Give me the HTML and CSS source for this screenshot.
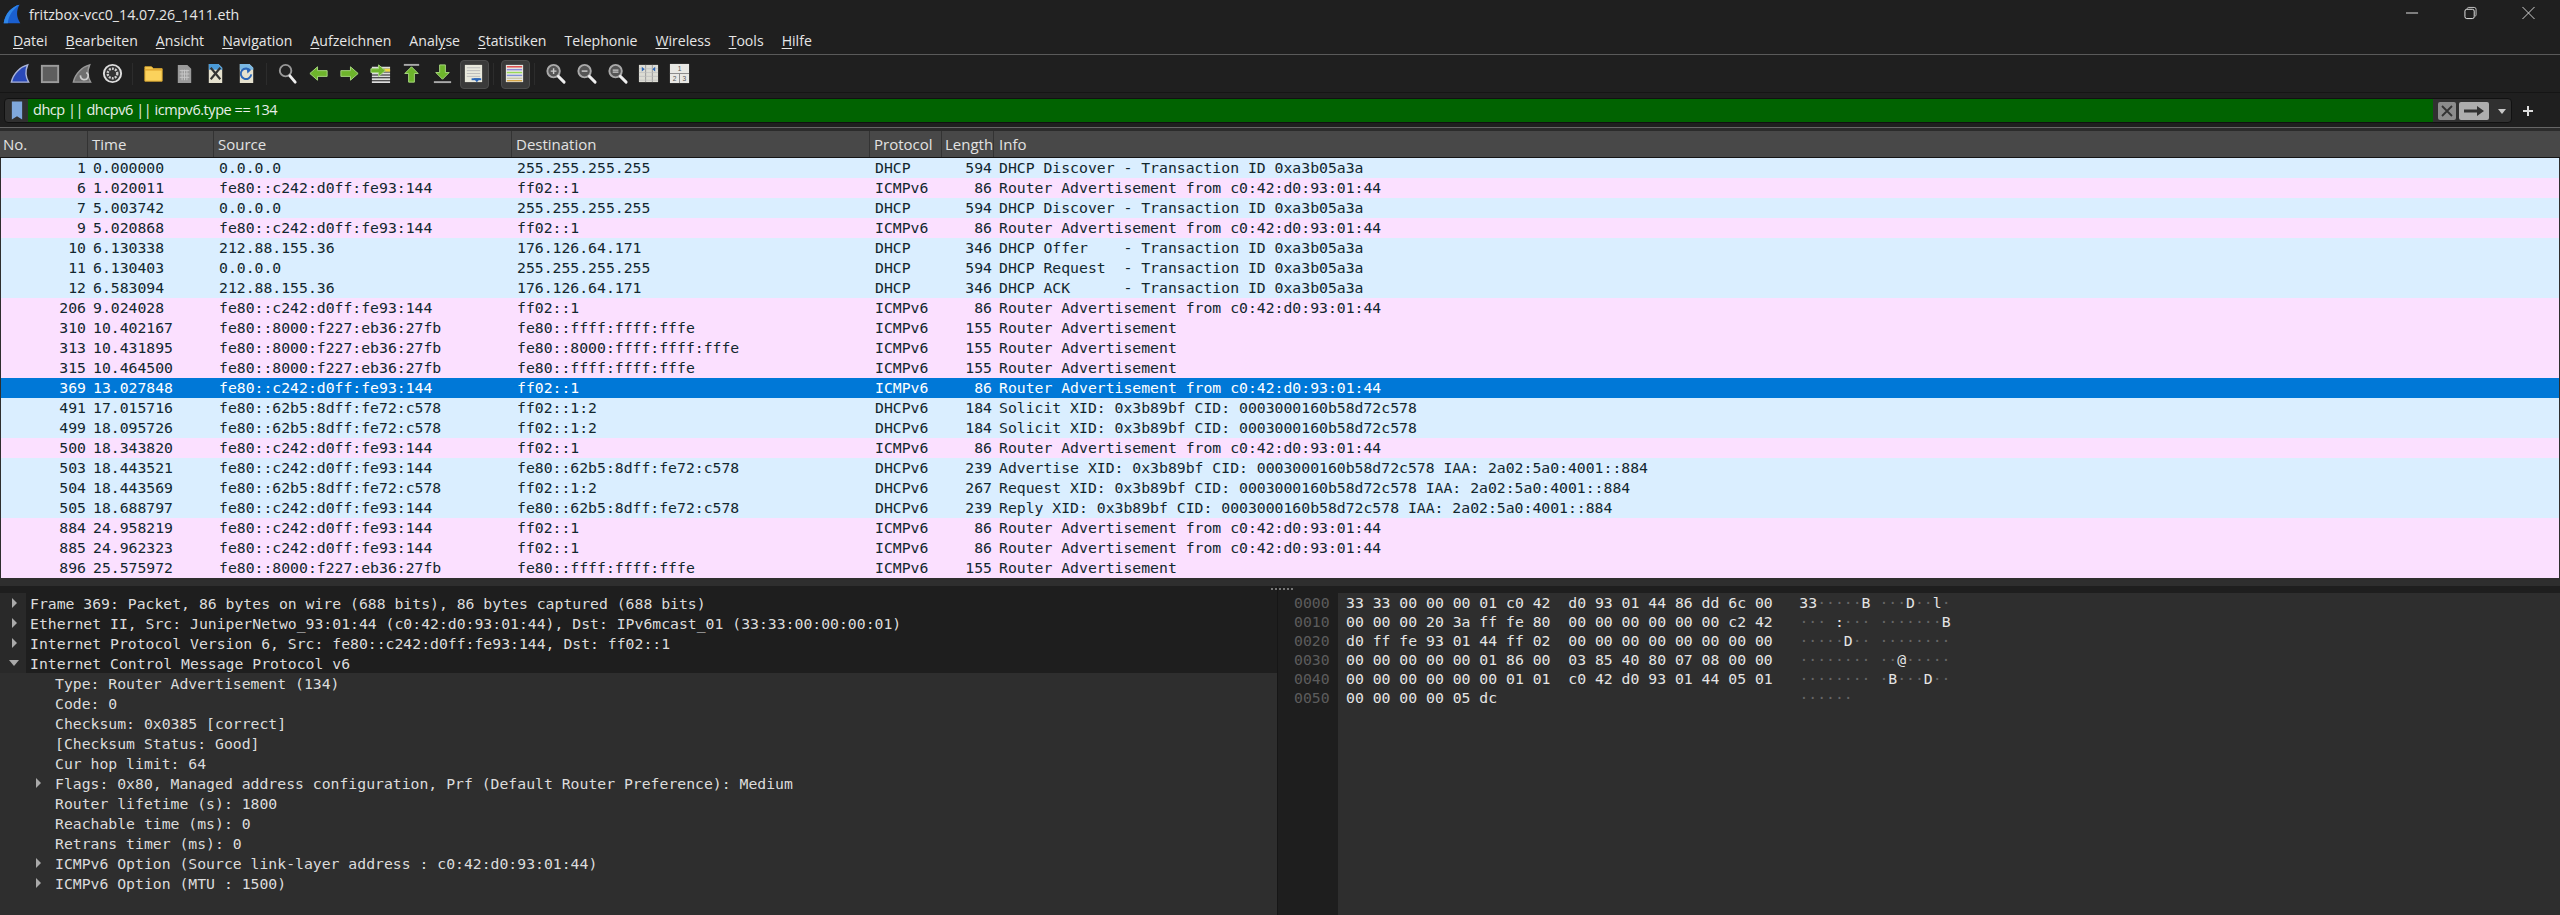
FILE: index.html
```html
<!DOCTYPE html>
<html lang="de">
<head>
<meta charset="utf-8">
<title>fritzbox-vcc0_14.07.26_1411.eth</title>
<link rel="stylesheet" href="styles.css">
</head>
<body>
<svg class="defs" width="0" height="0">
  <symbol id="fin" viewBox="0 0 24 24"><path d="M20.5 3C13 5 5.5 12 3.5 21H21.5C18 15 18 9 20.5 3Z"/></symbol>
  <symbol id="glass" viewBox="0 0 24 24"><circle cx="10" cy="9.500" r="6.500" fill="#555" stroke="#aaa" stroke-width="2"/><path d="M15 15l6 6" stroke="#eee" stroke-width="3" stroke-linecap="round"/></symbol>
</svg>
<header class="title">
  <svg class="app" viewBox="0 0 24 24"><path d="M21 1C12 3 4 11 2 23H22C17 16 17 8 21 1Z" fill="#1a5fd0"/><path d="M21 1C12 3 4 11 2 23H7C8 13 14 6 21 1Z" fill="#2f86e8"/></svg>
  <span class="title-text">fritzbox-vcc0_14.07.26_1411.eth</span>
  <div class="winbtns">
    <svg class="wb" viewBox="0 0 14 14"><path d="M0 7H13" stroke="#eee" stroke-width="1"/></svg>
    <svg class="wb" viewBox="0 0 14 14"><path d="M3.500 2.500V2a1.500 1.500 0 0 1 1.500-1h6a2 2 0 0 1 2 2v6a1.500 1.500 0 0 1-1 1.500" fill="none" stroke="#ccc"/><rect x="1" y="3" width="10" height="10" rx="2" fill="none" stroke="#eee"/></svg>
    <svg class="wb" viewBox="0 0 14 14"><path d="M.5.500l13 13M13.500.500l-13 13" stroke="#ddd" stroke-width="1"/></svg>
  </div>
</header>
<nav class="menu">
  <span><u>D</u>atei</span><span><u>B</u>earbeiten</span><span><u>A</u>nsicht</span><span><u>N</u>avigation</span><span><u>A</u>ufzeichnen</span><span>Anal<u>y</u>se</span><span><u>S</u>tatistiken</span><span>Telephonie</span><span><u>W</u>ireless</span><span><u>T</u>ools</span><span><u>H</u>ilfe</span>
</nav>
<div class="toolbar">
  <div class="tb"><svg viewBox="0 0 24 24"><use href="#fin" fill="#2a49b8" stroke="#aab4d8" stroke-width="1.500"/></svg></div>
  <div class="tb"><svg viewBox="0 0 24 24"><rect x="3" y="4" width="17" height="17" fill="#5e5e5e" stroke="#9c9c9c" stroke-width="2"/></svg></div>
  <div class="tb"><svg viewBox="0 0 24 24"><use href="#fin" fill="#6e6e6e" stroke="#999" stroke-width="1.500"/><path d="M11 14a4 4 0 1 0 6-3" fill="none" stroke="#ccc" stroke-width="1.800"/></svg></div>
  <div class="tb"><svg viewBox="0 0 24 24"><circle cx="12" cy="12" r="9" fill="#333" stroke="#ddd" stroke-width="2"/><circle cx="12" cy="12" r="5" fill="none" stroke="#ccc" stroke-width="2.500" stroke-dasharray="2 1.200"/><circle cx="12" cy="12" r="2.500" fill="#333"/></svg></div>
  <div class="sep"></div>
  <div class="tb"><svg viewBox="0 0 24 24"><path d="M3 7V5h7l2 2h9v13H3Z" fill="#fbd25c" stroke="#d8a62e"/><path d="M3 7h18v2H3Z" fill="#e2ab34"/></svg></div>
  <div class="tb"><svg viewBox="0 0 24 24"><path d="M5 3h10l4 4v15H5Z" fill="#9a9a9a"/><path d="M7 9h10M7 12.500h10M7 16h10M9.500 8v11M12 8v11M14.500 8v11" stroke="#c8c8c8" stroke-width="1"/></svg></div>
  <div class="tb"><svg viewBox="0 0 24 24"><path d="M5 2h10l4 4v16H5Z" fill="#e6e2cf"/><path d="M5 2h10l4 4v2H5Z" fill="#4a9ad8"/><path d="M7 6l10 12M17 6L7 18" stroke="#333" stroke-width="2.200"/></svg></div>
  <div class="tb"><svg viewBox="0 0 24 24"><path d="M5 2h10l4 4v16H5Z" fill="#e6e2cf"/><path d="M5 2h10l4 4v2H5Z" fill="#7ab8e4"/><path d="M16 9a5.500 5.500 0 1 0 1 4" fill="none" stroke="#2b66b8" stroke-width="2"/><path d="M12 6l4 3-3 3Z" fill="#2b66b8"/></svg></div>
  <div class="sep"></div>
  <div class="tb"><svg viewBox="0 0 24 24"><circle cx="10" cy="9" r="6" fill="#222" stroke="#999" stroke-width="2"/><path d="M14.500 14.500l5.500 6.500" stroke="#eee" stroke-width="3" stroke-linecap="round"/></svg></div>
  <div class="tb"><svg viewBox="0 0 24 24"><path d="M3 12l8-7v4h10v6H11v4Z" fill="#6eb52c" stroke="#a8d880"/></svg></div>
  <div class="tb"><svg viewBox="0 0 24 24"><path d="M21 12l-8-7v4H3v6h10v4Z" fill="#6eb52c" stroke="#a8d880"/></svg></div>
  <div class="tb"><svg viewBox="0 0 24 24"><path d="M3 6h19M3 9h19M3 12h19M3 15h19M3 18h19M3 21h19" stroke="#ddd" stroke-width="2"/><path d="M16 7h6v3h-6Z" fill="#f2d640"/><path d="M2 7h8V3l7 6-7 6v-4H2Z" fill="#6eb52c" stroke="#a8d880"/></svg></div>
  <div class="tb"><svg viewBox="0 0 24 24"><path d="M4 3h16" stroke="#aaa" stroke-width="2"/><path d="M12 5l7 7h-4v9H9v-9H5Z" fill="#6eb52c" stroke="#a8d880"/></svg></div>
  <div class="tb"><svg viewBox="0 0 24 24"><path d="M3 21h18" stroke="#aaa" stroke-width="2"/><path d="M12 18l7-7h-4V3H9v8H5Z" fill="#6eb52c" stroke="#a8d880"/></svg></div>
  <div class="tb on"><svg viewBox="0 0 24 24"><path d="M3 3h18v18H3Z" fill="#e8e8dc"/><path d="M5 6h14M5 9h14M5 12h14M5 15h14" stroke="#bbb"/><path d="M12 17h7l-3.500 4Z" fill="#2b66b8"/><path d="M10 17h10v2H10Z" fill="#2b66b8"/></svg></div>
  <div class="sep"></div>
  <div class="tb on"><svg viewBox="0 0 24 24"><path d="M3 3h18v18H3Z" fill="#e8e8e4"/><path d="M4 5h16" stroke="#e04848" stroke-width="1.500"/><path d="M4 8h16" stroke="#8a8ad8" stroke-width="1.500"/><path d="M4 11h16" stroke="#98d858" stroke-width="1.500"/><path d="M4 14h16" stroke="#8090d8" stroke-width="1.500"/><path d="M4 17h16" stroke="#c8c8a8" stroke-width="1.500"/><path d="M4 19.500h16" stroke="#d8a848" stroke-width="1.500"/></svg></div>
  <div class="sep"></div>
  <div class="tb"><svg viewBox="0 0 24 24"><use href="#glass"/><path d="M7 9.500h6M10 6.500v6" stroke="#ccc" stroke-width="1.500"/></svg></div>
  <div class="tb"><svg viewBox="0 0 24 24"><use href="#glass"/><path d="M7 9.500h6" stroke="#ccc" stroke-width="1.500"/></svg></div>
  <div class="tb"><svg viewBox="0 0 24 24"><use href="#glass"/><path d="M7 8.500h6M7 10.500h6" stroke="#ccc" stroke-width="1.200"/></svg></div>
  <div class="tb"><svg viewBox="0 0 24 24"><path d="M2 3h20v18H2Z" fill="#dcdcd4"/><path d="M9 3v18M16 3v18" stroke="#999"/><path d="M2 7h20M2 11h20M2 15h20M2 19h20" stroke="#bbb" stroke-width=".7"/><path d="M5 5l3 2.500-3 2.500ZM19 5l-3 2.500 3 2.500Z" fill="#2b66b8"/></svg></div>
  <div class="tb"><svg viewBox="0 0 24 24"><path d="M2 2h20v20H2Z" fill="#e8e8e4"/><path d="M2 12h20M12 12v10" stroke="#888"/><text x="12" y="9.500" class="n">1</text><text x="7" y="20" class="n">2</text><text x="17" y="20" class="n">3</text></svg></div>
</div>
<div class="filterbar">
  <div class="filter">
    <div class="bm"><svg viewBox="0 0 14 22"><path d="M1 0h12v21l-6-4-6 4Z" fill="#7fa8dc"/></svg></div>
    <div class="expr">dhcp || dhcpv6 || icmpv6.type == 134</div>
    <div class="fbtns">
      <svg class="fb-x" viewBox="0 0 18 18"><rect width="18" height="18" rx="2" fill="#8c8c8c"/><path d="M4 4l10 10M14 4L4 14" stroke="#333" stroke-width="1.800"/></svg>
      <svg class="fb-a" viewBox="0 0 30 18"><rect width="30" height="18" rx="2" fill="#adadad"/><path d="M5 7.500h13V4l7 5-7 5v-3.500H5Z" fill="#333"/></svg>
      <span class="drop"></span>
    </div>
  </div>
  <svg class="plus" viewBox="0 0 12 12"><path d="M6 1v10M1 6h10" stroke="#ddd" stroke-width="2"/></svg>
</div>
<div class="rule"></div>
<div class="head r">
  <span>No.</span><span>Time</span><span>Source</span><span>Destination</span><span>Protocol</span><span>Length</span><span>Info</span>
</div>
<main class="list">
  <div class="r b"><span>1</span><span>0.000000</span><span>0.0.0.0</span><span>255.255.255.255</span><span>DHCP</span><span>594</span><span>DHCP Discover - Transaction ID 0xa3b05a3a</span></div>
  <div class="r p"><span>6</span><span>1.020011</span><span>fe80::c242:d0ff:fe93:144</span><span>ff02::1</span><span>ICMPv6</span><span>86</span><span>Router Advertisement from c0:42:d0:93:01:44</span></div>
  <div class="r b"><span>7</span><span>5.003742</span><span>0.0.0.0</span><span>255.255.255.255</span><span>DHCP</span><span>594</span><span>DHCP Discover - Transaction ID 0xa3b05a3a</span></div>
  <div class="r p"><span>9</span><span>5.020868</span><span>fe80::c242:d0ff:fe93:144</span><span>ff02::1</span><span>ICMPv6</span><span>86</span><span>Router Advertisement from c0:42:d0:93:01:44</span></div>
  <div class="r b"><span>10</span><span>6.130338</span><span>212.88.155.36</span><span>176.126.64.171</span><span>DHCP</span><span>346</span><span>DHCP Offer    - Transaction ID 0xa3b05a3a</span></div>
  <div class="r b"><span>11</span><span>6.130403</span><span>0.0.0.0</span><span>255.255.255.255</span><span>DHCP</span><span>594</span><span>DHCP Request  - Transaction ID 0xa3b05a3a</span></div>
  <div class="r b"><span>12</span><span>6.583094</span><span>212.88.155.36</span><span>176.126.64.171</span><span>DHCP</span><span>346</span><span>DHCP ACK      - Transaction ID 0xa3b05a3a</span></div>
  <div class="r p"><span>206</span><span>9.024028</span><span>fe80::c242:d0ff:fe93:144</span><span>ff02::1</span><span>ICMPv6</span><span>86</span><span>Router Advertisement from c0:42:d0:93:01:44</span></div>
  <div class="r p"><span>310</span><span>10.402167</span><span>fe80::8000:f227:eb36:27fb</span><span>fe80::ffff:ffff:fffe</span><span>ICMPv6</span><span>155</span><span>Router Advertisement</span></div>
  <div class="r p"><span>313</span><span>10.431895</span><span>fe80::8000:f227:eb36:27fb</span><span>fe80::8000:ffff:ffff:fffe</span><span>ICMPv6</span><span>155</span><span>Router Advertisement</span></div>
  <div class="r p"><span>315</span><span>10.464500</span><span>fe80::8000:f227:eb36:27fb</span><span>fe80::ffff:ffff:fffe</span><span>ICMPv6</span><span>155</span><span>Router Advertisement</span></div>
  <div class="r s"><span>369</span><span>13.027848</span><span>fe80::c242:d0ff:fe93:144</span><span>ff02::1</span><span>ICMPv6</span><span>86</span><span>Router Advertisement from c0:42:d0:93:01:44</span></div>
  <div class="r b"><span>491</span><span>17.015716</span><span>fe80::62b5:8dff:fe72:c578</span><span>ff02::1:2</span><span>DHCPv6</span><span>184</span><span>Solicit XID: 0x3b89bf CID: 0003000160b58d72c578</span></div>
  <div class="r b"><span>499</span><span>18.095726</span><span>fe80::62b5:8dff:fe72:c578</span><span>ff02::1:2</span><span>DHCPv6</span><span>184</span><span>Solicit XID: 0x3b89bf CID: 0003000160b58d72c578</span></div>
  <div class="r p"><span>500</span><span>18.343820</span><span>fe80::c242:d0ff:fe93:144</span><span>ff02::1</span><span>ICMPv6</span><span>86</span><span>Router Advertisement from c0:42:d0:93:01:44</span></div>
  <div class="r b"><span>503</span><span>18.443521</span><span>fe80::c242:d0ff:fe93:144</span><span>fe80::62b5:8dff:fe72:c578</span><span>DHCPv6</span><span>239</span><span>Advertise XID: 0x3b89bf CID: 0003000160b58d72c578 IAA: 2a02:5a0:4001::884</span></div>
  <div class="r b"><span>504</span><span>18.443569</span><span>fe80::62b5:8dff:fe72:c578</span><span>ff02::1:2</span><span>DHCPv6</span><span>267</span><span>Request XID: 0x3b89bf CID: 0003000160b58d72c578 IAA: 2a02:5a0:4001::884</span></div>
  <div class="r b"><span>505</span><span>18.688797</span><span>fe80::c242:d0ff:fe93:144</span><span>fe80::62b5:8dff:fe72:c578</span><span>DHCPv6</span><span>239</span><span>Reply XID: 0x3b89bf CID: 0003000160b58d72c578 IAA: 2a02:5a0:4001::884</span></div>
  <div class="r p"><span>884</span><span>24.958219</span><span>fe80::c242:d0ff:fe93:144</span><span>ff02::1</span><span>ICMPv6</span><span>86</span><span>Router Advertisement from c0:42:d0:93:01:44</span></div>
  <div class="r p"><span>885</span><span>24.962323</span><span>fe80::c242:d0ff:fe93:144</span><span>ff02::1</span><span>ICMPv6</span><span>86</span><span>Router Advertisement from c0:42:d0:93:01:44</span></div>
  <div class="r p"><span>896</span><span>25.575972</span><span>fe80::8000:f227:eb36:27fb</span><span>fe80::ffff:ffff:fffe</span><span>ICMPv6</span><span>155</span><span>Router Advertisement</span></div>
</main>
<div class="splitter"></div>
<div class="panes">
  <section class="details">
    <div class="handle"></div>
    <div class="d top"><i class="tri"></i>Frame 369: Packet, 86 bytes on wire (688 bits), 86 bytes captured (688 bits)</div>
    <div class="d top"><i class="tri"></i>Ethernet II, Src: JuniperNetwo_93:01:44 (c0:42:d0:93:01:44), Dst: IPv6mcast_01 (33:33:00:00:00:01)</div>
    <div class="d top"><i class="tri"></i>Internet Protocol Version 6, Src: fe80::c242:d0ff:fe93:144, Dst: ff02::1</div>
    <div class="d top"><i class="tri open"></i>Internet Control Message Protocol v6</div>
    <div class="d sub">Type: Router Advertisement (134)</div>
    <div class="d sub">Code: 0</div>
    <div class="d sub">Checksum: 0x0385 [correct]</div>
    <div class="d sub">[Checksum Status: Good]</div>
    <div class="d sub">Cur hop limit: 64</div>
    <div class="d sub"><i class="tri"></i>Flags: 0x80, Managed address configuration, Prf (Default Router Preference): Medium</div>
    <div class="d sub">Router lifetime (s): 1800</div>
    <div class="d sub">Reachable time (ms): 0</div>
    <div class="d sub">Retrans timer (ms): 0</div>
    <div class="d sub"><i class="tri"></i>ICMPv6 Option (Source link-layer address : c0:42:d0:93:01:44)</div>
    <div class="d sub"><i class="tri"></i>ICMPv6 Option (MTU : 1500)</div>
  </section>
  <section class="bytes">
    <div class="offsets"><div>0000</div><div>0010</div><div>0020</div><div>0030</div><div>0040</div><div>0050</div></div>
    <div class="hex"><div>33 33 00 00 00 01 c0 42  d0 93 01 44 86 dd 6c 00   33<b>·····</b>B <b>···</b>D<b>··</b>l<b>·</b></div><div>00 00 00 20 3a ff fe 80  00 00 00 00 00 00 c2 42   <b>···</b> :<b>···</b> <b>·······</b>B</div><div>d0 ff fe 93 01 44 ff 02  00 00 00 00 00 00 00 00   <b>·····</b>D<b>··</b> <b>········</b></div><div>00 00 00 00 00 01 86 00  03 85 40 80 07 08 00 00   <b>········</b> <b>··</b>@<b>·····</b></div><div>00 00 00 00 00 00 01 01  c0 42 d0 93 01 44 05 01   <b>········</b> <b>·</b>B<b>···</b>D<b>··</b></div><div>00 00 00 00 05 dc                                  <b>······</b></div></div>
  </section>
</div>
</body>
</html>
```

FILE: styles.css
```css
* { box-sizing: border-box; }
html, body { margin: 0; height: 915px; overflow: hidden; }
body {
  width: 2560px;
  background: #1f1f1f;
  color: #e6e6e6;
  font-family: "Open Sans", "Noto Sans", sans-serif;
  font-size: 14px;
  display: flex;
  flex-direction: column;
}
.defs { position: absolute; }

.title { height: 28px; display: flex; align-items: center; padding-left: 2px; flex: none; }
.app { width: 20px; height: 22px; }
.title-text { margin-left: 7px; font-size: 14.2px; }
.winbtns { margin-left: auto; display: flex; gap: 45px; padding-right: 25px; padding-bottom: 2px; }
.wb { width: 13px; height: 14px; }

.menu {
  height: 27px; flex: none; display: flex; gap: 18px; align-items: center;
  padding: 0 0 1px 13px; border-bottom: 1px solid #5a5a5a;
  font-size: 14.1px;
}
.menu u { text-underline-offset: 2px; }

.toolbar { height: 38px; flex: none; display: flex; align-items: center; padding-left: 4px; border-bottom: 1px solid #151515; }
.tb { width: 31px; height: 27px; display: flex; align-items: center; justify-content: center; }
.tb svg { width: 23px; height: 23px; }
.tb.on { position: relative; }
.tb.on::before {
  content: ""; position: absolute; left: 2px; top: 0; width: 27px; height: 27px;
  background: #3a3a3a; border: 1px solid #4c4c4c; border-radius: 4px;
}
.tb.on svg { position: relative; }
.sep { width: 10px; height: 22px; position: relative; }
.sep::after { content: ""; position: absolute; left: 4px; top: 0; width: 1px; height: 22px; background: #2c2c2c; }
.n { font-family: "Liberation Sans", sans-serif; font-size: 7px; fill: #555; text-anchor: middle; }

.filterbar { height: 34px; flex: none; display: flex; align-items: center; padding: 1px 0 0 4px; }
.filter {
  width: 2508px; height: 25px; display: flex; background: #303030;
  border: 1px solid #111; border-radius: 4px; overflow: hidden;
}
.bm { width: 23px; display: flex; align-items: center; justify-content: center; }
.bm svg { width: 12px; height: 20px; }
.expr {
  width: 2405px; background: #016301; color: #e8eee8; padding-left: 5px;
  font-size: 14.5px; line-height: 22px; letter-spacing: -.45px;
}
.fbtns { flex: 1; display: flex; align-items: center; padding-left: 5px; }
.fb-x { width: 18px; height: 18px; }
.fb-a { width: 30px; height: 18px; margin-left: 3px; }
.drop {
  width: 0; height: 0; margin-left: 9px;
  border: 4px solid transparent; border-top: 5px solid #c8c8c8; margin-top: 5px;
}
.plus { width: 12px; height: 12px; margin-left: 10px; }

.rule { height: 4px; flex: none; border-top: 1px solid #666; background: #2b2b2b; }

.r {
  display: grid;
  grid-template-columns: 88px 126px 298px 358px 72px 52px 1fr;
  height: 20px;
  flex: none;
  font-family: "DejaVu Sans Mono", monospace;
  font-size: 14.78px;
  line-height: 20px;
  white-space: pre;
  color: #12272e;
}
.r span { padding-left: 5px; overflow: hidden; }
.r span:nth-child(1), .r span:nth-child(6) { text-align: right; padding: 0 2px 0 0; }

.head {
  height: 27px; background: #484848; border-bottom: 1px solid #151515;
  font-family: "Open Sans", "Noto Sans", sans-serif; font-size: 15px; line-height: 27px;
  color: #e2e2e2;
}
.head span { border-right: 1px solid #333; padding-left: 4px; }
.head span:nth-child(1) { text-align: left; padding: 0 0 0 3px; }
.head span:nth-child(6) { text-align: left; padding: 0 0 0 3px; }
.head span:nth-child(7) { border: 0; padding-left: 5px; }

.list { flex: none; display: flex; flex-direction: column; border: solid #2e2e2e; border-width: 0 1px; }
.list .r { grid-template-columns: 87px 126px 298px 358px 72px 52px 1fr; }
.b { background: #daeeff; }
.p { background: #fbe0ff; }
.s { background: #0078d7; color: #fff; }

.splitter { height: 8px; flex: none; background: #2e2e2e; }

.panes { flex: 1; display: flex; background: #2e2e2e; min-height: 0; }
.details { width: 1277px; flex: none; padding-top: 7px; position: relative; background: linear-gradient(#1e1e1e 7px, transparent 7px); }
.handle {
  position: absolute; right: -16px; top: 2px; width: 22px; height: 2px;
  background: repeating-linear-gradient(90deg, #777 0 2px, transparent 2px 4px);
}
.d {
  height: 20px; display: flex; align-items: center; position: relative;
  font-family: "DejaVu Sans Mono", monospace; font-size: 14.78px; white-space: pre; color: #dcdcdc;
}
.top { background: #1e1e1e; padding-left: 30px; }
.top::before { content: ""; position: absolute; left: 0; top: 0; width: 26px; height: 20px; background: #292929; }
.sub { padding-left: 55px; }
.tri {
  display: block; position: absolute; left: 12px; top: 5px; width: 0; height: 0;
  border: 5px solid transparent; border-left: 5px solid #aaa; border-right: 0;
  z-index: 1;
}
.tri.open {
  left: 9px; top: 7px; border: 5px solid transparent; border-top: 6px solid #aaa; border-bottom: 0;
}
.sub .tri { left: 36px; }

.bytes { flex: 1; display: flex; background: linear-gradient(#1e1e1e 7px, transparent 7px); }
.offsets {
  width: 61px; flex: none; padding: 7px 0 0 16px; background: #1e1e1e; color: #5c5c5c;
  font-family: "DejaVu Sans Mono", monospace; font-size: 14.78px; line-height: 19px;
  border-left: 1px solid #161616;
}
.hex {
  padding: 7px 0 0 8px; color: #e4e4e4;
  font-family: "DejaVu Sans Mono", monospace; font-size: 14.78px; line-height: 19px;
}
.hex div { white-space: pre; }
.hex b { font-weight: 400; color: #666; }
```
